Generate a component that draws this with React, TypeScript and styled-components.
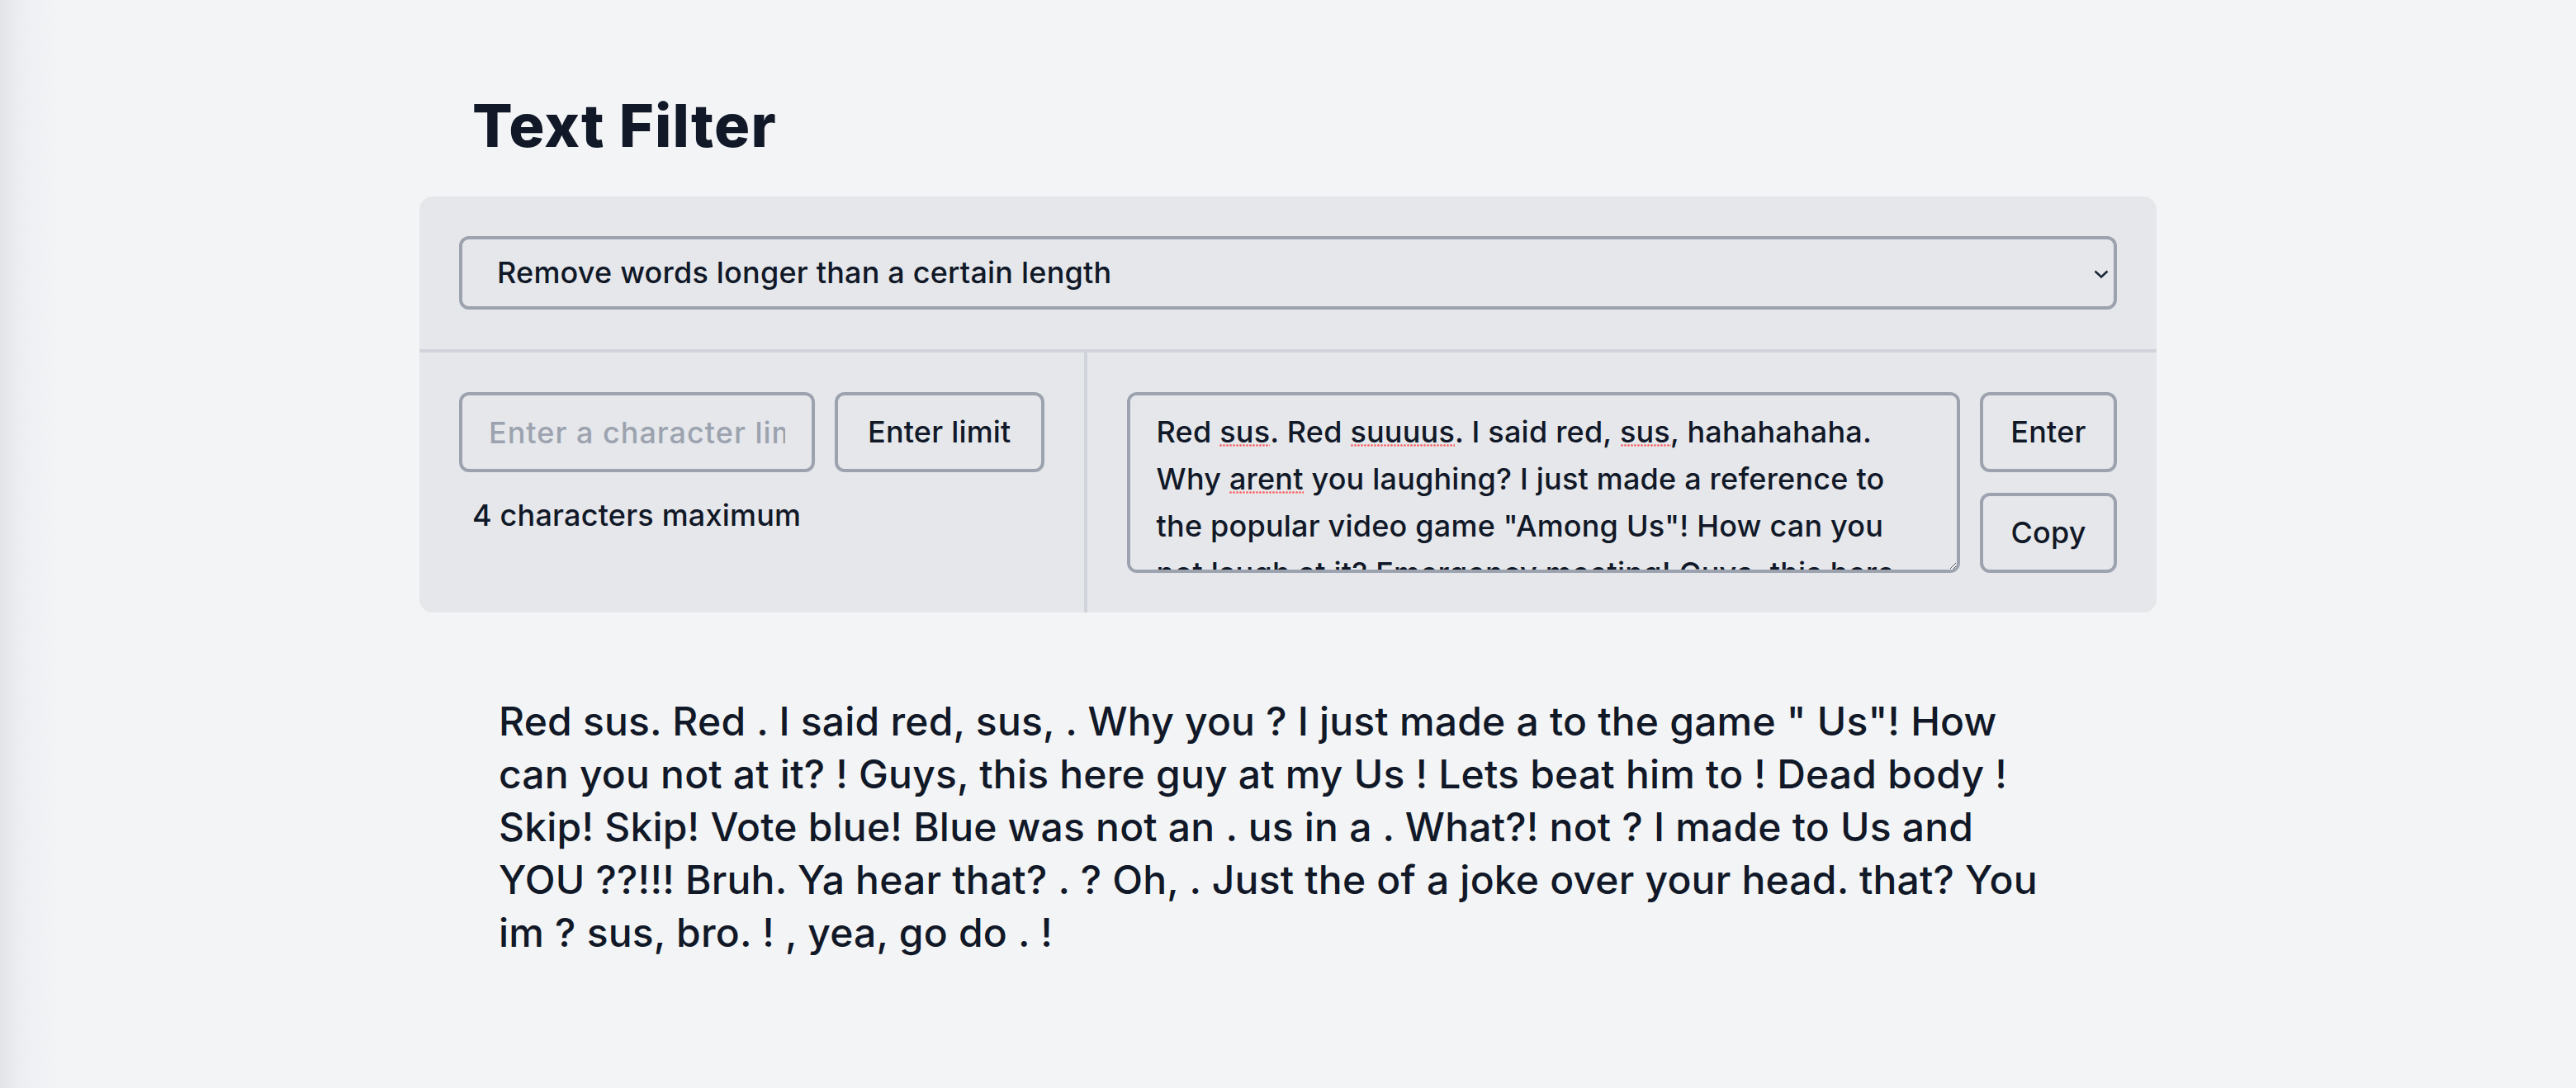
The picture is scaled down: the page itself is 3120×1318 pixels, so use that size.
import React, { useLayoutEffect, useRef, useState } from "react";
import styled, { createGlobalStyle } from "styled-components";

const FONT = `Inter, "Noto Sans", "Liberation Sans", sans-serif`;

const GlobalStyle = createGlobalStyle`
  html, body {
    margin: 0;
    padding: 0;
  }
  body {
    min-height: 100vh;
    background: linear-gradient(to right, #e2e4e8 0px, #eaecef 18px, #f0f1f4 40px, #f3f4f6 70px);
    font-family: ${FONT};
    color: #111827;
  }
  * { box-sizing: border-box; }
`;

const Page = styled.main`
  width: 2104px;
  margin: 0 auto;
  padding-top: 112px;
`;

const Title = styled.h1`
  margin: 0 0 46px;
  padding-left: 64px;
  font-size: 72px;
  line-height: 80px;
  font-weight: 800;
  letter-spacing: 0.016em;
  color: #111827;
`;

const Panel = styled.section`
  background: #e5e7eb;
  border-radius: 16px;
  overflow: hidden;
`;

const ModeBar = styled.div`
  padding: 48px;
  border-bottom: 4px solid #d1d5db;
`;

const SelectWrap = styled.div`
  position: relative;
`;

const controlText = `
  font-family: ${FONT};
  font-size: 36px;
  font-weight: 500;
  line-height: 57px;
  letter-spacing: 0.2px;
  color: #111827;
`;

const Select = styled.select`
  appearance: none;
  width: 100%;
  height: 89px;
  padding: 12px 40px 12px 42px;
  border: 4px solid #9ca3af;
  border-radius: 12px;
  background: #e5e7eb;
  ${controlText}
  outline: none;
`;

const Chevron = styled.svg`
  position: absolute;
  right: 10px;
  top: 50%;
  width: 18px;
  height: 10px;
  margin-top: -4px;
  pointer-events: none;
`;

const Controls = styled.div`
  display: flex;
  align-items: stretch;
`;

const LimitColumn = styled.div`
  flex: none;
  padding: 48px;
  border-right: 4px solid #d1d5db;
`;

const LimitRow = styled.div`
  display: flex;
  gap: 24px;
`;

const Field = styled.input`
  width: 431px;
  height: 97px;
  padding: 16px 32px;
  border: 4px solid #9ca3af;
  border-radius: 12px;
  background: #e5e7eb;
  ${controlText}
  outline: none;
  &::placeholder {
    color: #9ca3af;
    letter-spacing: 1px;
  }
`;

const Button = styled.button`
  height: 97px;
  padding: 0 36px;
  border: 4px solid #9ca3af;
  border-radius: 12px;
  background: #e5e7eb;
  ${controlText}
  cursor: pointer;
  white-space: nowrap;
`;

const Hint = styled.p`
  margin: 24px 0 0;
  padding-left: 16px;
  ${controlText}
`;

const InputColumn = styled.div`
  flex: 1;
  display: flex;
  gap: 24px;
  padding: 48px;
`;

const TextWrap = styled.div`
  position: relative;
  flex: 1;
  display: flex;
`;

const TextBox = styled.textarea`
  flex: 1;
  height: 219px;
  padding: 16px 32px;
  border: 4px solid #9ca3af;
  border-radius: 12px;
  background: #e5e7eb;
  ${controlText}
  outline: none;
  resize: vertical;
  scrollbar-width: none;
  &::-webkit-scrollbar { display: none; }
`;

const SpellMark = styled.span`
  position: absolute;
  height: 3px;
  pointer-events: none;
  background-image: radial-gradient(circle at 1.5px 1.5px, #f87171 1.1px, transparent 1.6px);
  background-size: 4px 3px;
  background-repeat: repeat-x;
`;

const ButtonStack = styled.div`
  display: flex;
  flex-direction: column;
  gap: 25px;
  width: 166px;
`;

const StackButton = styled(Button)`
  width: 100%;
  padding: 0;
`;

const Output = styled.p`
  margin: 0;
  padding: 100px 112px 0 96px;
  font-size: 48px;
  font-weight: 500;
  line-height: 64px;
  letter-spacing: 0.2px;
  color: #111827;
`;

const SOURCE =
  'Red sus. Red suuuus. I said red, sus, hahahahaha. Why arent you laughing? I just made a reference to the popular video game "Among Us"! How can you not laugh at it? Emergency meeting! Guys, this here guy doesnt laugh at my funny Among Us memes! Lets beat him to death! Dead body reported! Skip! Skip! Vote blue! Blue was not an impostor. Among us in a nutshell. What?! Youre still not laughing? I made references to Among Us and YOU STILL ARENT LAUGHING??!!! Bruh. Ya hear that? Wooooosh. Whooooosh? Oh, nevermind. Just the sound of a joke flying over your head. Whats that? You think im annoying? Kinda sus, bro. Hahahaha! Anyway, yea, go do whatever. Hahahahahaha!';

const RESULT =
  'Red sus. Red . I said red, sus, . Why you ? I just made a to the game " Us"! How can you not at it? ! Guys, this here guy at my Us ! Lets beat him to ! Dead body ! Skip! Skip! Vote blue! Blue was not an . us in a . What?! not ? I made to Us and YOU ??!!! Bruh. Ya hear that? . ? Oh, . Just the of a joke over your head. that? You im ? sus, bro. ! , yea, go do . !';

const FLAGGED = new Set(["sus", "suuuus", "arent"]);

type Mark = { left: number; top: number; width: number };

function useSpellMarks(ref: React.RefObject<HTMLTextAreaElement | null>, text: string) {
  const [marks, setMarks] = useState<Mark[]>([]);

  useLayoutEffect(() => {
    const compute = () => {
      const ta = ref.current;
      if (!ta) return;
      const cs = getComputedStyle(ta);
      const ctx = document.createElement("canvas").getContext("2d");
      if (!ctx) return;
      ctx.font = `${cs.fontWeight} ${cs.fontSize} ${cs.fontFamily}`;
      (ctx as unknown as { letterSpacing: string }).letterSpacing = cs.letterSpacing;
      const measure = (s: string) => ctx.measureText(s).width;
      const offL = ta.offsetLeft + parseFloat(cs.borderLeftWidth) + parseFloat(cs.paddingLeft);
      const offT = ta.offsetTop + parseFloat(cs.borderTopWidth) + parseFloat(cs.paddingTop);
      const lineH = parseFloat(cs.lineHeight);
      const avail = ta.clientWidth - parseFloat(cs.paddingLeft) - parseFloat(cs.paddingRight);
      const visibleLines = Math.floor((ta.clientHeight - parseFloat(cs.paddingTop)) / lineH) + 1;

      const found: Mark[] = [];
      let line = 0;
      let current = "";
      for (const word of text.split(" ")) {
        const candidate = current ? `${current} ${word}` : word;
        let startX: number;
        if (current && measure(candidate) > avail) {
          line += 1;
          current = word;
          startX = 0;
        } else {
          startX = current ? measure(`${current} `) : 0;
          current = candidate;
        }
        if (line >= visibleLines) break;
        const core = word.replace(/[^A-Za-z]/g, "");
        const lead = word.match(/^[^A-Za-z]*/)?.[0] ?? "";
        if (FLAGGED.has(core)) {
          found.push({
            left: offL + startX + measure(lead),
            top: offT + line * lineH + 43,
            width: measure(core),
          });
        }
      }
      setMarks(found);
    };
    compute();
    document.fonts?.ready.then(compute);
  }, [ref, text]);

  return marks;
}

export default function App() {
  const [mode, setMode] = useState("length");
  const [text, setText] = useState(SOURCE);
  const [limit, setLimit] = useState("");
  const areaRef = useRef<HTMLTextAreaElement>(null);
  const marks = useSpellMarks(areaRef, text);

  return (
    <>
      <GlobalStyle />
      <Page>
        <Title>Text Filter</Title>
        <Panel>
          <ModeBar>
            <SelectWrap>
              <Select value={mode} onChange={(e) => setMode(e.target.value)}>
                <option value="length">Remove words longer than a certain length</option>
                <option value="short">Remove words shorter than a certain length</option>
              </Select>
              <Chevron viewBox="0 0 18 10" fill="none">
                <path d="M1.5 1.5 L9 8.5 L16.5 1.5" stroke="#1f2937" strokeWidth="2.6" />
              </Chevron>
            </SelectWrap>
          </ModeBar>
          <Controls>
            <LimitColumn>
              <LimitRow>
                <Field
                  placeholder="Enter a character limit"
                  value={limit}
                  onChange={(e) => setLimit(e.target.value)}
                />
                <Button>Enter limit</Button>
              </LimitRow>
              <Hint>4 characters maximum</Hint>
            </LimitColumn>
            <InputColumn>
              <TextWrap>
                <TextBox
                  ref={areaRef}
                  value={text}
                  onChange={(e) => setText(e.target.value)}
                  spellCheck={false}
                />
                {marks.map((m, i) => (
                  <SpellMark key={i} style={{ left: m.left, top: m.top, width: m.width }} />
                ))}
              </TextWrap>
              <ButtonStack>
                <StackButton>Enter</StackButton>
                <StackButton>Copy</StackButton>
              </ButtonStack>
            </InputColumn>
          </Controls>
        </Panel>
        <Output>{RESULT}</Output>
      </Page>
    </>
  );
}
